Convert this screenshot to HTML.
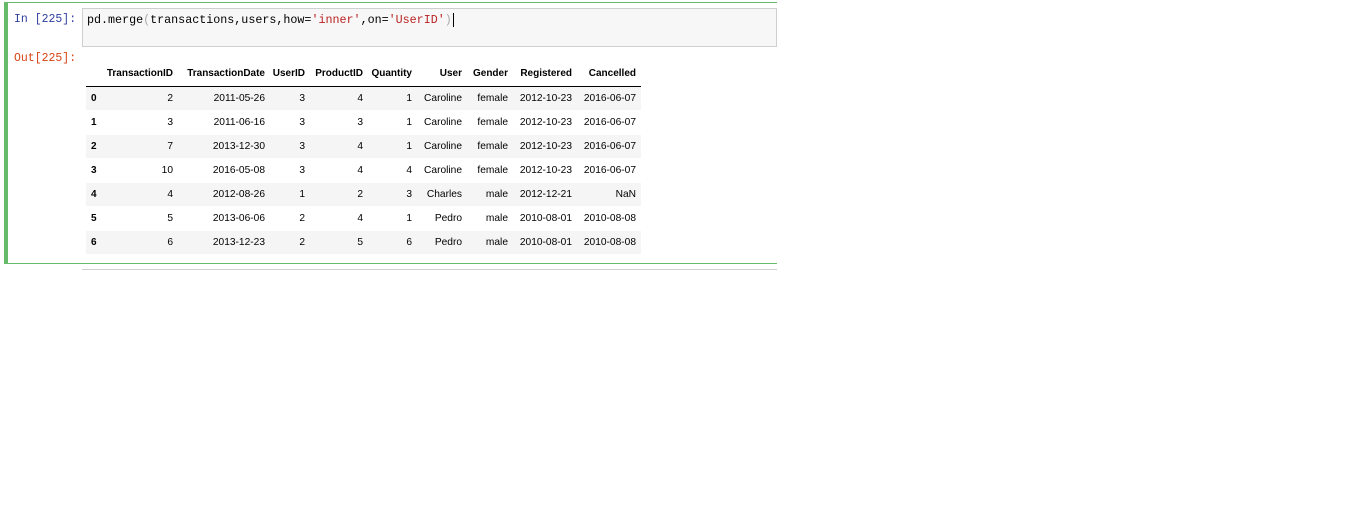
<!DOCTYPE html><html><head><style>
body{margin:0;width:1356px;height:517px;background:#fff;position:relative;overflow:hidden;font-family:"Liberation Sans",Arial,sans-serif}
.a{position:absolute}
.c{position:absolute;font-size:10.2px;color:#000;text-align:right;white-space:nowrap}
.h{font-weight:bold;font-size:10px}
.mono{font-family:"Liberation Mono",monospace}
</style></head><body>
<div class="a" style="left:4px;top:2px;width:773px;height:260px;border-top:1px solid #66bb6a;border-bottom:1px solid #66bb6a;"></div>
<div class="a" style="left:4px;top:2px;width:4px;height:262px;background:#66bb6a"></div>
<div class="a mono" style="left:14px;top:13px;font-size:11.5px;color:#303f9f">In [225]:</div>
<div class="a" style="left:82px;top:8px;width:693px;height:37px;border:1px solid #cfcfcf;background:#f7f7f7"></div>
<div class="a mono" style="left:87px;top:13px;font-size:11.7px;color:#000;white-space:pre">pd.merge<span style="color:#aaa">(</span>transactions,users,how=<span style="color:#ba2121">'inner'</span>,on=<span style="color:#ba2121">'UserID'</span><span style="color:#aaa">)</span><span style="border-left:1px solid #000;margin-left:1px"></span></div>
<div class="a mono" style="left:14px;top:52px;font-size:11.5px;color:#d84315">Out[225]:</div>
<div class="a" style="left:82px;top:269px;width:695px;height:1px;background:#cfcfcf"></div>
<div class="a" style="left:86px;top:86px;width:555px;height:1px;background:#000"></div>
<div id="t"></div>
<script>
var rights=[173,265,305,363,412,462,508,572,636];
var hdr=["TransactionID","TransactionDate","UserID","ProductID","Quantity","User","Gender","Registered","Cancelled"];
var rows=[["2","2011-05-26","3","4","1","Caroline","female","2012-10-23","2016-06-07"],
["3","2011-06-16","3","3","1","Caroline","female","2012-10-23","2016-06-07"],
["7","2013-12-30","3","4","1","Caroline","female","2012-10-23","2016-06-07"],
["10","2016-05-08","3","4","4","Caroline","female","2012-10-23","2016-06-07"],
["4","2012-08-26","1","2","3","Charles","male","2012-12-21","NaN"],
["5","2013-06-06","2","4","1","Pedro","male","2010-08-01","2010-08-08"],
["6","2013-12-23","2","5","6","Pedro","male","2010-08-01","2010-08-08"]];
var s="";
hdr.forEach(function(t,i){s+='<div class="c h" style="right:'+(1356-rights[i])+'px;top:68px">'+t+'</div>';});
rows.forEach(function(r,j){var y=87+j*24;
if(j%2==0)s+='<div class="a" style="left:86px;top:'+y+'px;width:555px;height:23px;background:#f5f5f5"></div>';
s+='<div class="c h" style="left:91px;top:'+(y+6)+'px;text-align:left">'+j+'</div>';
r.forEach(function(t,i){s+='<div class="c" style="right:'+(1356-rights[i])+'px;top:'+(y+6)+'px">'+t+'</div>';});});
document.getElementById('t').innerHTML=s;
</script>
</body></html>
